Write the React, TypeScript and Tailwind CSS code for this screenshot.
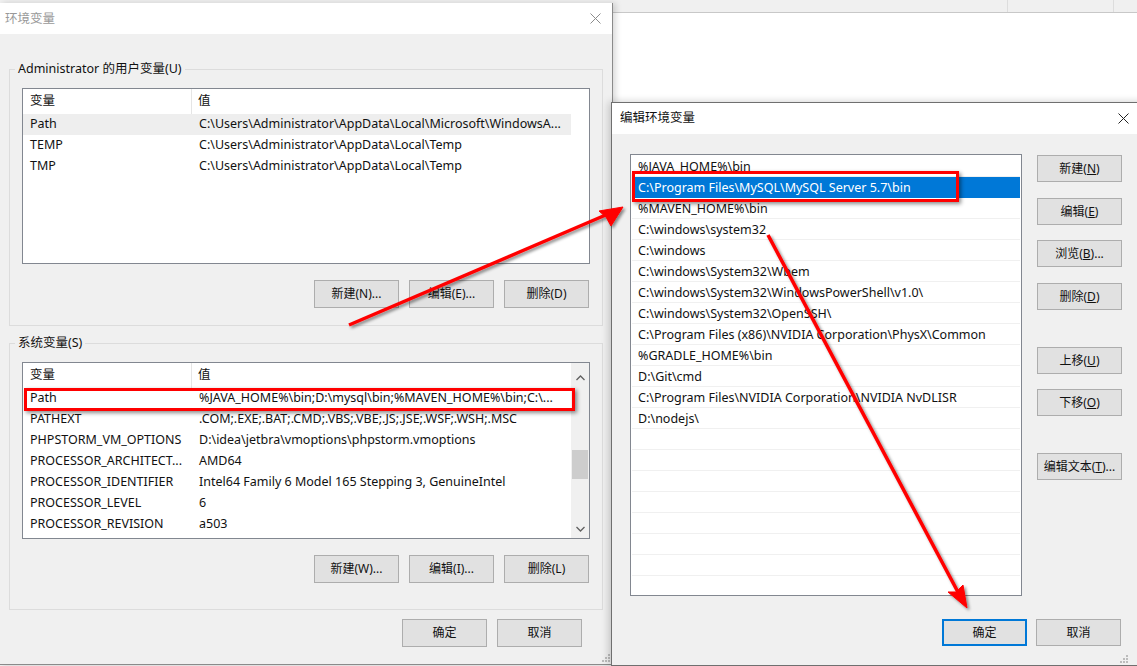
import React from 'react';

const font = 'font-["Noto_Sans","Noto_Sans_CJK_SC",sans-serif]';

const userVars = [
  ['Path', 'C:\\Users\\Administrator\\AppData\\Local\\Microsoft\\WindowsA...'],
  ['TEMP', 'C:\\Users\\Administrator\\AppData\\Local\\Temp'],
  ['TMP', 'C:\\Users\\Administrator\\AppData\\Local\\Temp'],
];

const sysVars = [
  ['Path', '%JAVA_HOME%\\bin;D:\\mysql\\bin;%MAVEN_HOME%\\bin;C:\\...'],
  ['PATHEXT', '.COM;.EXE;.BAT;.CMD;.VBS;.VBE;.JS;.JSE;.WSF;.WSH;.MSC'],
  ['PHPSTORM_VM_OPTIONS', 'D:\\idea\\jetbra\\vmoptions\\phpstorm.vmoptions'],
  ['PROCESSOR_ARCHITECT...', 'AMD64'],
  ['PROCESSOR_IDENTIFIER', 'Intel64 Family 6 Model 165 Stepping 3, GenuineIntel'],
  ['PROCESSOR_LEVEL', '6'],
  ['PROCESSOR_REVISION', 'a503'],
];

const paths = [
  '%JAVA_HOME%\\bin',
  'C:\\Program Files\\MySQL\\MySQL Server 5.7\\bin',
  '%MAVEN_HOME%\\bin',
  'C:\\windows\\system32',
  'C:\\windows',
  'C:\\windows\\System32\\Wbem',
  'C:\\windows\\System32\\WindowsPowerShell\\v1.0\\',
  'C:\\windows\\System32\\OpenSSH\\',
  'C:\\Program Files (x86)\\NVIDIA Corporation\\PhysX\\Common',
  '%GRADLE_HOME%\\bin',
  'D:\\Git\\cmd',
  'C:\\Program Files\\NVIDIA Corporation\\NVIDIA NvDLISR',
  'D:\\nodejs\\',
  '', '', '', '', '', '', '', '',
];

const Btn: React.FC<{ children: React.ReactNode; h?: string; primary?: boolean }> = ({
  children,
  h = 'h-[28px]',
  primary,
}) => (
  <button
    className={`w-[85px] ${h} bg-[#e1e1e1] text-[12px] text-[#111] flex items-center justify-center ${
      primary ? 'border-2 border-[#0078d7]' : 'border border-[#adadad]'
    }`}
  >
    {children}
  </button>
);

const Close: React.FC<{ color: string }> = ({ color }) => (
  <svg width="11" height="11" viewBox="0 0 11 11">
    <path d="M0.5 0.5 L10.5 10.5 M10.5 0.5 L0.5 10.5" stroke={color} strokeWidth="1" />
  </svg>
);

const Chevron: React.FC<{ up?: boolean }> = ({ up }) => (
  <svg width="9" height="6" viewBox="0 0 9 6">
    <path d={up ? 'M0.5 5 L4.5 1 L8.5 5' : 'M0.5 1 L4.5 5 L8.5 1'} stroke="#606060" strokeWidth="1.3" fill="none" />
  </svg>
);

const Grip: React.FC = () => (
  <div className="grid grid-cols-3 gap-[1px] w-[8px]">
    {[0, 0, 1, 0, 1, 1, 1, 1, 1].map((v, i) => (
      <div key={i} className={`w-[2px] h-[2px] ${v ? 'bg-[#bcbcbc]' : ''}`} />
    ))}
  </div>
);

const VarList: React.FC<{
  rows: string[][];
  height: string;
  scroll?: boolean;
  highlight?: number;
  redBox?: boolean;
}> = ({ rows, height, scroll, highlight, redBox }) => (
  <div className={`relative ${height} bg-white border border-[#828790] flex text-[12.5px]`}>
    <div className="flex-1 flex flex-col">
      <div className="flex h-[25px] items-center">
        <div className="w-[169px] h-full pl-[7px] flex items-center border-r border-[#e5e5e5]">变量</div>
        <div className="pl-[6px]">值</div>
      </div>
      {rows.map(([k, v], i) => (
        <div key={k} className={`flex h-[21px] items-center ${i === highlight ? 'bg-[#eeeeee]' : ''}`}>
          <div className="w-[169px] pl-[7px] whitespace-nowrap overflow-hidden">{k}</div>
          <div className="pl-[7px] whitespace-nowrap">{v}</div>
        </div>
      ))}
      {redBox && (
        <div className="absolute left-[1px] top-[25px] w-[551px] h-[23px] border-[3px] border-[#ff0000] shadow-[2px_2px_4px_rgba(0,0,0,0.45)]" />
      )}
    </div>
    <div className={`w-[18px] flex flex-col ${scroll ? 'bg-[#f0f0f0]' : ''}`}>
      {scroll && (
        <>
          <div className="h-[17px] flex items-center justify-center mt-[6px]">
            <Chevron up />
          </div>
          <div className="h-[64px]" />
          <div className="h-[29px] mx-[1px] bg-[#cdcdcd]" />
          <div className="flex-1" />
          <div className="h-[17px] flex items-center justify-center mb-[1px]">
            <Chevron />
          </div>
        </>
      )}
    </div>
  </div>
);

const Group: React.FC<{ label: string; children: React.ReactNode; className?: string }> = ({
  label,
  children,
  className = '',
}) => (
  <fieldset className={`border border-[#dcdcdc] mx-[9px] px-[12px] ${className}`}>
    <legend className="-ml-[7px] px-[3px] text-[12.5px] leading-[16px] text-[#111]">{label}</legend>
    {children}
  </fieldset>
);

export default function App() {
  return (
    <div className={`relative w-[1137px] h-[666px] overflow-hidden bg-[#f0f0f0] text-[12px] text-[#111] ${font}`}>
      {/* window behind, top right */}
      <div className="absolute left-[613px] top-0 w-[524px] h-[12px] flex">
        <div className="w-[394px]" />
        <div className="w-[106px] border-l border-[#dddddd]" />
        <div className="flex-1 border-l border-[#dddddd]" />
      </div>
      <div className="absolute left-[613px] top-[12px] w-[524px] h-[90px] bg-white border-t border-[#c8c8c8]" />

      {/* 环境变量 */}
      <div className="absolute left-0 top-[3px] w-[613px] h-[662px] bg-[#f0f0f0] border-r border-b border-[#8a8a8a] shadow-[3px_0_6px_rgba(0,0,0,0.15)] flex flex-col">
        <div className="h-[31px] bg-white flex items-center justify-between pl-[5px] pr-[11px]">
          <span className="text-[#999] text-[12.5px] pt-[1px]">环境变量</span>
          <Close color="#8c8c8c" />
        </div>
        <Group label="Administrator 的用户变量(U)" className="mt-[27px] pt-[11px] pb-[17px]">
          <VarList rows={userVars} height="h-[176px]" highlight={0} />
          <div className="flex justify-end gap-[10px] mt-[16px] pr-[1px]">
            <Btn>新建(N)...</Btn>
            <Btn>编辑(E)...</Btn>
            <Btn>删除(D)</Btn>
          </div>
        </Group>
        <Group label="系统变量(S)" className="mt-[9px] pt-[11px] pb-[26px]">
          <VarList rows={sysVars} height="h-[177px]" scroll redBox />
          <div className="flex justify-end gap-[10px] mt-[16px] pr-[1px]">
            <Btn>新建(W)...</Btn>
            <Btn>编辑(I)...</Btn>
            <Btn>删除(L)</Btn>
          </div>
        </Group>
        <div className="flex justify-end gap-[10px] mt-[9px] pr-[30px]">
          <Btn>确定</Btn>
          <Btn>取消</Btn>
        </div>
        <div className="flex-1" />
        <div className="self-end mr-[2px] mb-[2px]">
          <Grip />
        </div>
      </div>

      {/* 编辑环境变量 */}
      <div className="absolute left-[611px] top-[102px] w-[536px] h-[564px] bg-[#f0f0f0] border-l border-t border-b border-[#6f6f6f] shadow-[-2px_0_8px_rgba(0,0,0,0.2)] flex flex-col">
        <div className="h-[31px] bg-white flex items-center justify-between pl-[8px] pr-[18px]">
          <span className="text-[#111] text-[12.5px]">编辑环境变量</span>
          <Close color="#222" />
        </div>
        <div className="flex mt-[20px] pl-[18px]">
          <div className="relative w-[392px] h-[442px] bg-white border border-[#828790] overflow-hidden px-[1px] pt-[1px] text-[12.5px]">
            {paths.map((p, i) => (
              <div
                key={i}
                className={`h-[21px] flex items-center pl-[6px] pt-[2px] whitespace-nowrap border-b ${
                  i === 1 ? 'bg-[#0078d7] text-white border-[#0078d7]' : 'border-[#f0f0f0]'
                }`}
              >
                {p}
              </div>
            ))}
            <div className="absolute left-[1px] top-[16px] w-[327px] h-[31px] border-[3px] border-[#ff0000] shadow-[2px_2px_4px_rgba(0,0,0,0.45)]" />
          </div>
          <div className="flex flex-col ml-[15px] mt-[1px]">
            <Btn h="h-[27px]">新建(<u>N</u>)</Btn>
            <div className="h-[16px]" />
            <Btn h="h-[27px]">编辑(<u>E</u>)</Btn>
            <div className="h-[15px]" />
            <Btn h="h-[27px]">浏览(<u>B</u>)...</Btn>
            <div className="h-[16px]" />
            <Btn h="h-[27px]">删除(<u>D</u>)</Btn>
            <div className="h-[37px]" />
            <Btn h="h-[27px]">上移(<u>U</u>)</Btn>
            <div className="h-[15px]" />
            <Btn h="h-[27px]">下移(<u>O</u>)</Btn>
            <div className="h-[37px]" />
            <Btn h="h-[27px]">编辑文本(<u>T</u>)...</Btn>
          </div>
        </div>
        <div className="flex gap-[9px] mt-[23px] pl-[330px]">
          <Btn h="h-[27px]" primary>
            确定
          </Btn>
          <Btn h="h-[27px]">取消</Btn>
        </div>
        <div className="flex-1" />
        <div className="self-start ml-[508px] mb-[2px]">
          <Grip />
        </div>
      </div>

      {/* annotation arrows */}
      <svg className="absolute inset-0 pointer-events-none" width="1137" height="666" viewBox="0 0 1137 666">
        <defs>
          <filter id="sh" x="-10%" y="-10%" width="130%" height="130%">
            <feDropShadow dx="2" dy="2" stdDeviation="1.6" floodColor="#000" floodOpacity="0.45" />
          </filter>
        </defs>
        <g filter="url(#sh)" fill="#ff0000" stroke="#ff0000">
          <line x1="349" y1="325" x2="608" y2="214" strokeWidth="3.5" />
          <polygon points="623,207 599,211 606,217 611,226" strokeWidth="1" />
          <line x1="768" y1="235" x2="959" y2="594" strokeWidth="3.5" />
          <polygon points="967,608 948,592 956,592 963,585" strokeWidth="1" />
        </g>
      </svg>
    </div>
  );
}
